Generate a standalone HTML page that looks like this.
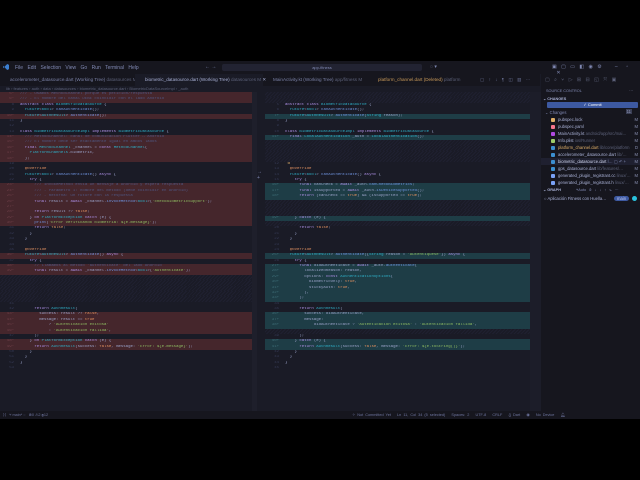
<!DOCTYPE html>
<html><head><meta charset="utf-8"><style>
*{margin:0;padding:0;box-sizing:border-box}
body{width:640px;height:480px;background:#000;overflow:hidden;font-family:"Liberation Sans",sans-serif;position:relative}
#win{position:absolute;left:0;top:61px;width:640px;height:358px;background:#1a1b26}
.abs{position:absolute}
#title{left:0;top:0;width:640px;height:13px;background:#16161e;color:#8089b3;font-size:5px}
#tabs{left:0;top:13px;width:540px;height:12px;background:#16161e;font-size:4.6px;color:#7a81a6}
.tab{position:absolute;top:0;height:12px;line-height:12px;padding-left:10px;white-space:nowrap}
#crumb{left:0;top:25px;width:540px;height:6px;font-size:4px;color:#5b6078;line-height:6px;padding-left:6px}
.pane{position:absolute;top:31px;font-family:"Liberation Mono",monospace;font-size:4px;color:#9aa2c8}
.l{height:5.38px;line-height:5.38px;white-space:pre;position:relative;overflow:hidden}
.l i{font-style:normal;display:inline-block;width:14px;text-align:right;color:#353a55;margin-right:6px}
.d{background:#45262c}.d i{color:#6e3f48}
.t{background:#1e3d46}.t i{color:#3e6d77}
.h{background:repeating-linear-gradient(135deg,#1a1b26 0 1.5px,#1f2030 1.5px 2.5px)}
.k{color:#a98ce0}.y{color:#2fb0c8}.s{color:#8fbd62}.c{color:#4f5680}.f{color:#6e92dd}.o{color:#e09060}
#side{left:541px;top:13px;width:99px;height:337px;background:#16161e;font-size:4.2px;color:#a9b1d6}
.it{position:absolute;left:8px;height:7px;line-height:7px;white-space:nowrap;width:90px}
.it b{display:inline-block;width:4px;height:4px;margin-right:3px;vertical-align:-0.5px;border-radius:1px}
.it span.m{position:absolute;right:3px;color:#8a91b3}
#status{left:0;top:350px;width:640px;height:8px;background:#16161e;font-size:3.8px;color:#6f76a0;line-height:8px}
</style></head><body>
<div id="win">
<div id="title" class="abs">
 <div class="abs" style="left:3px;top:3px;width:6px;height:6px;background:#3c7fd0;clip-path:polygon(70% 0,100% 15%,100% 85%,70% 100%,0 30%,0 70%)"></div>
 <div class="abs" style="left:15px;top:4px;word-spacing:3px">File Edit Selection View Go Run Terminal Help</div>
 <div class="abs" style="left:205px;top:3px">← →</div>
 <div class="abs" style="left:222px;top:3px;width:200px;height:7px;background:#222332;border-radius:2px;text-align:center;font-size:4px;line-height:7px">app-fitness</div>
 <div class="abs" style="left:430px;top:3px">◌ ▾</div>
 <div class="abs" style="left:552px;top:3px;word-spacing:3px">▣ ▢ ▭ ◧ ◉ ⚙ &nbsp; – &nbsp;▫ &nbsp;✕</div>
</div>
<div id="tabs" class="abs">
 <div class="tab" style="left:0;width:135px">accelerometer_datasource.dart (Working Tree) <span style="color:#5b6078">datasources M</span></div>
 <div class="tab" style="left:135px;width:128px;background:#1a1b26;color:#a9b1d6">biometric_datasource.dart (Working Tree) <span style="color:#5b6078">datasources M</span> ✕</div>
 <div class="tab" style="left:263px;width:105px">MainActivity.kt (Working Tree) <span style="color:#5b6078">app/fitness M</span></div>
 <div class="tab" style="left:368px;width:100px;color:#c99a5a">platform_channel.dart (Deleted) <span style="color:#5b6078">platform</span></div>
 <div class="tab" style="left:470px;color:#6a7196;word-spacing:3px">▢ ↑ ↓ ¶ ◫ ▥ ···</div>
</div>
<div id="crumb" class="abs">lib › features › auth › data › datasources › biometric_datasource.dart › BiometricDataSourceImpl › _auth</div>

<div class="pane" style="left:0;width:252px">
<div class="l d"><i>5−</i><span class="c">/// - Usamos MethodChannel porque es petición/respuesta</span></div>
<div class="l d"><i>6−</i><span class="c">/// - El nombre del canal DEBE coincidir con el lado Android</span></div>
<div class="l"><i>8</i><span class="k">abstract class</span> <span class="y">BiometricDataSource</span> {</div>
<div class="l"><i>9</i>  <span class="y">Future</span>&lt;<span class="y">bool</span>&gt; <span class="f">canAuthenticate</span>();</div>
<div class="l d"><i>10−</i>  <span class="y">Future</span>&lt;<span class="y">AuthResult</span>&gt; <span class="f">authenticate</span>();</div>
<div class="l"><i>11</i>}</div>
<div class="l"><i>12</i></div>
<div class="l"><i>13</i><span class="k">class</span> <span class="y">BiometricDataSourceImpl</span> <span class="k">implements</span> <span class="y">BiometricDataSource</span> {</div>
<div class="l d"><i>14−</i>  <span class="c">/// MethodChannel: canal de comunicación Flutter ↔ Android</span></div>
<div class="l d"><i>15−</i>  <span class="c">/// El nombre debe ser exactamente igual en ambos lados</span></div>
<div class="l d"><i>16−</i>  <span class="k">final</span> <span class="y">MethodChannel</span> _channel = <span class="k">const</span> <span class="y">MethodChannel</span>(</div>
<div class="l d"><i>17−</i>    <span class="y">PlatformChannels</span>.biometric,</div>
<div class="l d"><i>18−</i>  );</div>
<div class="l"><i>19</i></div>
<div class="l"><i>20</i>  <span class="o">@override</span></div>
<div class="l"><i>21</i>  <span class="y">Future</span>&lt;<span class="y">bool</span>&gt; <span class="f">canAuthenticate</span>() <span class="k">async</span> {</div>
<div class="l"><i>22</i>    <span class="k">try</span> {</div>
<div class="l d"><i>23−</i>      <span class="c">/// invokeMethod envía un mensaje a Android y espera respuesta</span></div>
<div class="l d"><i>24−</i>      <span class="c">/// - Parámetro 1: nombre del método (debe coincidir en Android)</span></div>
<div class="l d"><i>25−</i>      <span class="c">/// - Retorna: un Future con la respuesta</span></div>
<div class="l d"><i>26−</i>      <span class="k">final</span> result = <span class="k">await</span> _channel.<span class="f">invokeMethod</span>&lt;<span class="y">bool</span>&gt;(<span class="s">'checkBiometricSupport'</span>);</div>
<div class="l d"><i>27−</i></div>
<div class="l d"><i>28−</i>      <span class="k">return</span> result ?? <span class="o">false</span>;</div>
<div class="l d"><i>29−</i>    } <span class="k">on</span> <span class="y">PlatformException</span> <span class="k">catch</span> (e) {</div>
<div class="l d"><i>30−</i>      <span class="f">print</span>(<span class="s">'Error verificando biometría: ${e.message}'</span>);</div>
<div class="l"><i>31</i>      <span class="k">return</span> <span class="o">false</span>;</div>
<div class="l"><i>32</i>    }</div>
<div class="l"><i>33</i>  }</div>
<div class="l"><i>34</i></div>
<div class="l"><i>35</i>  <span class="o">@override</span></div>
<div class="l d"><i>36−</i>  <span class="y">Future</span>&lt;<span class="y">AuthResult</span>&gt; <span class="f">authenticate</span>() <span class="k">async</span> {</div>
<div class="l"><i>37</i>    <span class="k">try</span> {</div>
<div class="l d"><i>38−</i>      <span class="c">// Llamamos al método 'authenticate' del lado Android</span></div>
<div class="l d"><i>39−</i>      <span class="k">final</span> result = <span class="k">await</span> _channel.<span class="f">invokeMethod</span>&lt;<span class="y">bool</span>&gt;(<span class="s">'authenticate'</span>);</div>
<div class="l h"></div><div class="l h"></div><div class="l h"></div><div class="l h"></div><div class="l h"></div>
<div class="l"><i>41</i></div>
<div class="l"><i>42</i>      <span class="k">return</span> <span class="y">AuthResult</span>(</div>
<div class="l d"><i>43−</i>        success: result ?? <span class="o">false</span>,</div>
<div class="l d"><i>44−</i>        message: result == <span class="o">true</span></div>
<div class="l d"><i>45−</i>            ? <span class="s">'Autenticación exitosa'</span></div>
<div class="l d"><i>46−</i>            : <span class="s">'Autenticación fallida'</span>,</div>
<div class="l"><i>47</i>      );</div>
<div class="l d"><i>48−</i>    } <span class="k">on</span> <span class="y">PlatformException</span> <span class="k">catch</span> (e) {</div>
<div class="l d"><i>49−</i>      <span class="k">return</span> <span class="y">AuthResult</span>(success: <span class="o">false</span>, message: <span class="s">'Error: ${e.message}'</span>);</div>
<div class="l"><i>50</i>    }</div>
<div class="l"><i>51</i>  }</div>
<div class="l"><i>52</i>}</div>
<div class="l"><i>53</i></div>
</div>
<div class="abs" style="left:252px;top:31px;width:5px;height:319px;background:#1e1f2b"></div>
<div class="abs" style="left:257px;top:108px;font-size:5px;color:#8089b3;line-height:6px">→<br>+</div>

<div class="pane" style="left:265px;width:265px">
<div class="l h"></div><div class="l h"></div>
<div class="l"><i>5</i><span class="k">abstract class</span> <span class="y">BiometricDataSource</span> {</div>
<div class="l"><i>6</i>  <span class="y">Future</span>&lt;<span class="y">bool</span>&gt; <span class="f">canAuthenticate</span>();</div>
<div class="l t"><i>7+</i>  <span class="y">Future</span>&lt;<span class="y">AuthResult</span>&gt; <span class="f">authenticate</span>(<span class="y">String</span> reason);</div>
<div class="l"><i>8</i>}</div>
<div class="l"><i>9</i></div>
<div class="l"><i>10</i><span class="k">class</span> <span class="y">BiometricDataSourceImpl</span> <span class="k">implements</span> <span class="y">BiometricDataSource</span> {</div>
<div class="l t"><i>11+</i>  <span class="k">final</span> <span class="y">LocalAuthentication</span> _auth = <span class="y">LocalAuthentication</span>();</div>
<div class="l h"></div><div class="l h"></div><div class="l h"></div><div class="l h"></div>
<div class="l"><i>12</i> <span style="color:#e0af68">♁</span></div>
<div class="l"><i>13</i>  <span class="o">@override</span></div>
<div class="l"><i>14</i>  <span class="y">Future</span>&lt;<span class="y">bool</span>&gt; <span class="f">canAuthenticate</span>() <span class="k">async</span> {</div>
<div class="l"><i>15</i>    <span class="k">try</span> {</div>
<div class="l t"><i>16+</i>      <span class="k">final</span> canCheck = <span class="k">await</span> _auth.<span class="f">canCheckBiometrics</span>;</div>
<div class="l t"><i>17+</i>      <span class="k">final</span> isSupported = <span class="k">await</span> _auth.<span class="f">isDeviceSupported</span>();</div>
<div class="l t"><i>18+</i>      <span class="k">return</span> (canCheck == <span class="o">true</span>) &amp;&amp; (isSupported == <span class="o">true</span>);</div>
<div class="l h"></div><div class="l h"></div><div class="l h"></div>
<div class="l t"><i>19+</i>    } <span class="k">catch</span> (e) {</div>
<div class="l h"></div>
<div class="l"><i>20</i>      <span class="k">return</span> <span class="o">false</span>;</div>
<div class="l"><i>21</i>    }</div>
<div class="l"><i>22</i>  }</div>
<div class="l"><i>23</i></div>
<div class="l"><i>24</i>  <span class="o">@override</span></div>
<div class="l t"><i>25+</i>  <span class="y">Future</span>&lt;<span class="y">AuthResult</span>&gt; <span class="f">authenticate</span>({<span class="y">String</span> reason = <span class="s">'Autentíquese'</span>}) <span class="k">async</span> {</div>
<div class="l"><i>26</i>    <span class="k">try</span> {</div>
<div class="l t"><i>27+</i>      <span class="k">final</span> didAuthenticate = <span class="k">await</span> _auth.<span class="f">authenticate</span>(</div>
<div class="l t"><i>28+</i>        localizedReason: reason,</div>
<div class="l t"><i>29+</i>        options: <span class="k">const</span> <span class="y">AuthenticationOptions</span>(</div>
<div class="l t"><i>30+</i>          biometricOnly: <span class="o">true</span>,</div>
<div class="l t"><i>31+</i>          stickyAuth: <span class="o">true</span>,</div>
<div class="l t"><i>32+</i>        ),</div>
<div class="l t"><i>33+</i>      );</div>
<div class="l"><i>34</i></div>
<div class="l"><i>35</i>      <span class="k">return</span> <span class="y">AuthResult</span>(</div>
<div class="l t"><i>36+</i>        success: didAuthenticate,</div>
<div class="l t"><i>37+</i>        message:</div>
<div class="l t"><i>38+</i>            didAuthenticate ? <span class="s">'Autenticación exitosa'</span> : <span class="s">'Autenticación fallida'</span>,</div>
<div class="l h"></div>
<div class="l"><i>39</i>      );</div>
<div class="l t"><i>40+</i>    } <span class="k">catch</span> (e) {</div>
<div class="l t"><i>41+</i>      <span class="k">return</span> <span class="y">AuthResult</span>(success: <span class="o">false</span>, message: <span class="s">'Error: ${e.toString()}'</span>);</div>
<div class="l"><i>42</i>    }</div>
<div class="l"><i>43</i>  }</div>
<div class="l"><i>44</i>}</div>
<div class="l"><i>45</i></div>
</div>
<div class="abs" style="left:530px;top:31px;width:11px;height:319px;background:#1c1d29"></div>

<div id="side" class="abs">
 <div class="abs" style="left:0;top:0;width:99px;height:12px;color:#5b6078;font-size:5px;line-height:12px;padding-left:4px;word-spacing:3px">▢ ⌕ ⑂ ▷ ⊞ ⊟ ◱ ⤧ ▣</div>
 <div class="it" style="top:14px;left:5px;font-size:3.8px;color:#8089b3">SOURCE CONTROL<span class="m">···</span></div>
 <div class="it" style="top:22px;left:2px;font-size:3.8px;font-weight:bold">⌄ CHANGES</div>
 <div class="abs" style="left:6px;top:28px;width:91px;height:6px;background:#3d59a1;border-radius:1px;color:#fff;font-size:4px;line-height:6px;text-align:center">✓ Commit</div>
 <div class="it" style="top:35px;left:4px;color:#8089b3">⌄ Changes<span class="m" style="background:#3b3f55;padding:0 1px;line-height:5px">11</span></div>
 <div class="it" style="top:42px;left:10px"><b style="background:#e0af68"></b>pubspec.lock<span class="m">M</span></div>
 <div class="it" style="top:49px;left:10px"><b style="background:#f7768e"></b>pubspec.yaml<span class="m">M</span></div>
 <div class="it" style="top:56px;left:10px"><b style="background:#b04ae0"></b>MainActivity.kt <span style="color:#5b6078">android/app/src/mai…</span><span class="m">M</span></div>
 <div class="it" style="top:63px;left:10px"><b style="background:#9ece6a"></b>Info.plist <span style="color:#5b6078">ios/Runner</span><span class="m">M</span></div>
 <div class="it" style="top:70px;left:10px;color:#e0af68"><b style="background:#3c8fd0"></b>platform_channel.dart <span style="color:#5b6078">lib/core/platform</span><span class="m">D</span></div>
 <div class="it" style="top:77px;left:10px"><b style="background:#3c8fd0"></b>accelerometer_datasource.dart <span style="color:#5b6078">lib/…</span><span class="m">M</span></div>
 <div class="abs" style="left:0;top:84px;width:99px;height:7px;background:#1f2030"></div>
 <div class="it" style="top:84px;left:10px;color:#d0d6f0"><b style="background:#3c8fd0"></b>biometric_datasource.dart <span style="color:#8089b3">l… ▢ ↶ +</span><span class="m">M</span></div>
 <div class="it" style="top:91px;left:10px"><b style="background:#3c8fd0"></b>gps_datasource.dart <span style="color:#5b6078">lib/features/…</span><span class="m">M</span></div>
 <div class="it" style="top:98px;left:10px"><b style="background:#7aa2f7"></b>generated_plugin_registrant.cc <span style="color:#5b6078">linux/…</span><span class="m">M</span></div>
 <div class="it" style="top:105px;left:10px"><b style="background:#7aa2f7"></b>generated_plugin_registrant.h <span style="color:#5b6078">linux/…</span><span class="m">M</span></div>
 <div class="it" style="top:113px;left:2px;font-size:3.8px;font-weight:bold">⌄ GRAPH <span style="font-weight:normal;color:#8089b3;margin-left:14px;word-spacing:2px">⑂Auto ◉ ↓ ↓ ↑ ↻ ···</span></div>
 <div class="it" style="top:121px;left:3px">○ Aplicación Fitness con Huella…<span style="position:absolute;left:70px;top:1px;background:#3d59a1;border-radius:3px;padding:0 3px;line-height:5px;color:#c0caf5">main</span><span style="position:absolute;left:88px;top:1px;width:5px;height:5px;border-radius:50%;background:#2ac3de"></span></div>
</div>

<div id="status" class="abs">
 <span style="position:absolute;left:3px">⟩⟨ &nbsp; ⑂ main* ◌ &nbsp; ⊗0 ⚠2 ⓘ12</span>
 <span style="position:absolute;left:352px;word-spacing:1px">✧ Not Committed Yet &nbsp; Ln 11, Col 34 (5 selected) &nbsp; Spaces: 2 &nbsp; UTF-8 &nbsp; CRLF &nbsp; {} Dart &nbsp; ◉ &nbsp; No Device &nbsp; 🔔︎</span>
</div>
</div>
</body></html>
